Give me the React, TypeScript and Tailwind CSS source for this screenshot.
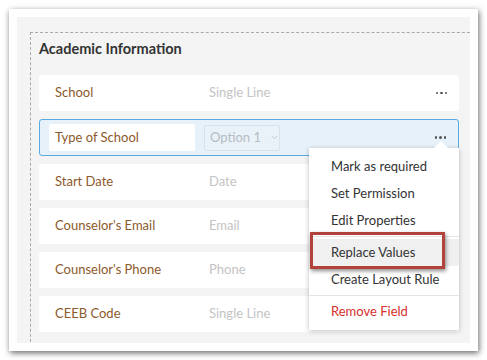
import { ChevronDown } from 'lucide-react'

const rows = [
  { label: 'School', type: 'Single Line' },
  { label: 'Type of School', type: 'select' },
  { label: 'Start Date', type: 'Date' },
  { label: "Counselor's Email", type: 'Email' },
  { label: "Counselor's Phone", type: 'Phone' },
  { label: 'CEEB Code', type: 'Single Line' },
]

const menu = [
  ['Mark as required', 'Set Permission', 'Edit Properties'],
  ['Replace Values', 'Create Layout Rule'],
  ['Remove Field'],
]

function Dots() {
  return (
    <div className="ml-auto mr-[12px] flex gap-[2px]">
      <span className="w-[2.5px] h-[2.5px] rounded-full bg-[#555]" />
      <span className="w-[2.5px] h-[2.5px] rounded-full bg-[#555]" />
      <span className="w-[2.5px] h-[2.5px] rounded-full bg-[#555]" />
    </div>
  )
}

export default function App() {
  return (
    <div className="w-[487px] h-[360px] bg-white font-['Lato',sans-serif] overflow-hidden">
      <div className="relative ml-[9px] mt-[9px] w-[469px] h-[342px] bg-white p-[8px] shadow-[1px_2px_6px_rgba(0,0,0,0.6)]">
        {/* Canvas */}
        <div className="w-full h-full bg-[#f4f4f4] overflow-hidden pl-[13px] pt-[15px]">
          <div className="w-[460px] h-[340px] border border-dashed border-[#a9a9a9] pl-[8px] pt-[6px]">
            <h2 className="text-[14.5px] font-bold text-[#333] leading-[20px] h-[36px]">Academic Information</h2>
            <div className="flex flex-col gap-[8px] w-[420px]">
              {rows.map((r) =>
                r.type === 'select' ? (
                  <div key={r.label} className="h-[37px] flex items-center rounded-[3px] border border-[#5aaae2] bg-[#e7f1fa] pl-[9px]">
                    <div className="w-[146px] h-[27px] bg-white rounded-[2px] flex items-center pl-[6px] text-[13px] text-[#8c5a2c]">
                      {r.label}
                    </div>
                    <div className="ml-[9px] w-[76px] h-[26px] border border-[#d6e2ec] bg-[#eaf2f9] rounded-[2px] flex items-center pl-[5px] text-[13px] text-[#b5bcc4]">
                      Option 1
                      <ChevronDown size={9} strokeWidth={2} className="ml-[9px] text-[#b5bcc4]" />
                    </div>
                    <Dots />
                  </div>
                ) : (
                  <div key={r.label} className="h-[36px] flex items-center rounded-[3px] bg-white pl-[16px]">
                    <span className="w-[154px] text-[13px] text-[#8c5a2c]">{r.label}</span>
                    <span className="text-[13px] text-[#c4c4c4]">{r.type}</span>
                    <Dots />
                  </div>
                )
              )}
            </div>
          </div>
        </div>

        {/* Field menu */}
        <div className="absolute left-[300px] top-[139px] w-[150px] bg-white shadow-[0_1px_5px_rgba(0,0,0,0.25)] pt-[5px] pb-[3px]">
          <div className="absolute -top-[7px] left-[125px] w-0 h-0 border-l-[7px] border-r-[7px] border-b-[7px] border-l-transparent border-r-transparent border-b-white" />
          {menu.map((group, gi) => (
            <div key={gi} className={gi > 0 ? 'border-t border-[#e4e4e4] py-[2px]' : 'pb-[2px]'}>
              {group.map((item) => (
                <div
                  key={item}
                  className={`h-[27px] flex items-center pl-[22px] text-[13px] ${
                    item === 'Remove Field' ? 'text-[#d4302c]' : 'text-[#333]'
                  } ${item === 'Replace Values' ? 'bg-[#f0f0f0]' : ''}`}
                >
                  {item}
                </div>
              ))}
            </div>
          ))}
        </div>

        {/* Annotation box */}
        <div className="absolute left-[301px] top-[223px] w-[135px] h-[37px] border-[3px] border-[#b2423c] shadow-[1px_2px_4px_rgba(0,0,0,0.45)]" />
      </div>
    </div>
  )
}
